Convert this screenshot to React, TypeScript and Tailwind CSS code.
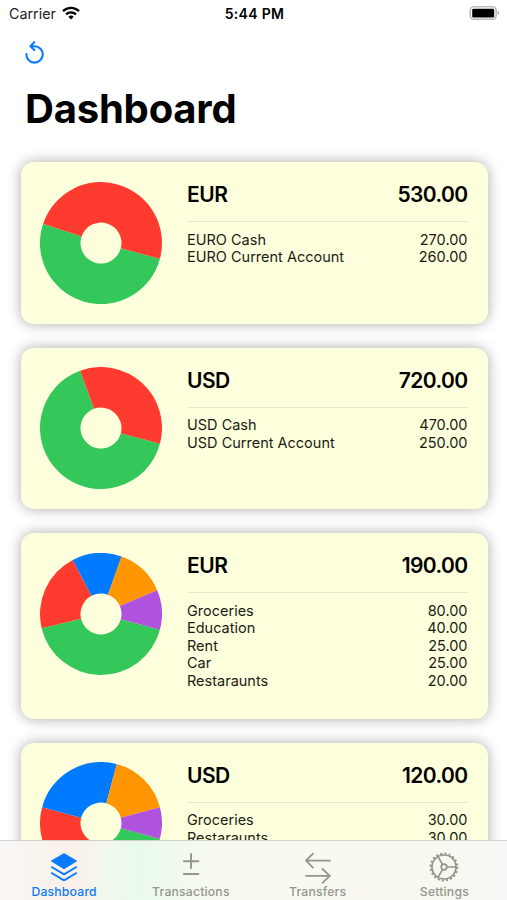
type Item = {
  name: string;
  amount: number;
};

type Account = {
  id: number;
  currency: string;
  height: string;
  items: Item[];
};

const COLORS = ["#34c759", "#ff3b30", "#007aff", "#ff9500", "#af52de"];

const accounts: Account[] = [
  {
    id: 1,
    currency: "EUR",
    height: "h-[161.5px]",
    items: [
      { name: "EURO Cash", amount: 270 },
      { name: "EURO Current Account", amount: 260 },
    ],
  },
  {
    id: 2,
    currency: "USD",
    height: "h-[161.5px]",
    items: [
      { name: "USD Cash", amount: 470 },
      { name: "USD Current Account", amount: 250 },
    ],
  },
  {
    id: 3,
    currency: "EUR",
    height: "h-[185.5px]",
    items: [
      { name: "Groceries", amount: 80 },
      { name: "Education", amount: 40 },
      { name: "Rent", amount: 25 },
      { name: "Car", amount: 25 },
      { name: "Restaraunts", amount: 20 },
    ],
  },
  {
    id: 4,
    currency: "USD",
    height: "h-[185.5px]",
    items: [
      { name: "Groceries", amount: 30 },
      { name: "Restaraunts", amount: 30 },
      { name: "Rent", amount: 30 },
      { name: "Education", amount: 20 },
      { name: "Car", amount: 10 },
    ],
  },
];

const getTotal = (items: Item[]) => items.reduce((sum, i) => sum + i.amount, 0);

const point = (angle: number, radius: number) => {
  const rad = (angle * Math.PI) / 180;
  return `${(61 + radius * Math.cos(rad)).toFixed(2)} ${(61 + radius * Math.sin(rad)).toFixed(2)}`;
};

const PieChart = ({ items }: { items: Item[] }) => {
  const total = getTotal(items);
  let angle = 15;

  return (
    <svg viewBox="0 0 122 122" className="size-[122px] shrink-0">
      {items.map((item, index) => {
        const start = angle;
        const end = start + (item.amount / total) * 360;
        const large = end - start > 180 ? 1 : 0;
        angle = end;
        return (
          <path
            key={item.name}
            fill={COLORS[index]}
            d={`M${point(start, 61)}A61 61 0 ${large} 1 ${point(end, 61)}L${point(end, 20.5)}A20.5 20.5 0 ${large} 0 ${point(start, 20.5)}Z`}
          />
        );
      })}
    </svg>
  );
};

const AccountCard = ({ account }: { account: Account }) => (
  <div
    className={`${account.height} shrink-0 flex gap-[25px] pl-[19.5px] pr-5 pt-[19.5px] rounded-[13px] bg-[#feffdc] shadow-[0_0_14px_rgba(0,0,0,0.33)]`}
  >
    <PieChart items={account.items} />
    <div className="flex-1">
      <div className="h-[40.5px] pt-[0.5px] flex justify-between border-b border-[#e6e7cb] text-[21px] leading-[26px] font-semibold">
        <span className="tracking-[-0.5px]">{account.currency}</span>
        <span className="tracking-[-0.6px]">{getTotal(account.items).toFixed(2)}</span>
      </div>
      <div className="pt-[8.5px] text-[14.5px] leading-[17.6px] text-[#1c1c14]">
        {account.items.map((item) => (
          <div key={item.name} className="flex justify-between">
            <span>{item.name}</span>
            <span>{item.amount.toFixed(2)}</span>
          </div>
        ))}
      </div>
    </div>
  </div>
);

const StatusBar = () => (
  <div className="h-7 shrink-0 grid grid-cols-3 items-center pl-[9px] pr-[7px] text-[14.3px]">
    <div className="flex items-center gap-[6px] text-[#222]">
      <span>Carrier</span>
      <svg viewBox="0 0 18 14" className="w-[18px] h-[14px] -mt-0.5" fill="none" stroke="#000" strokeWidth="2.3">
        <path d="M1 5.1a11.4 11.4 0 0 1 16 0" />
        <path d="M4 8.3a7.2 7.2 0 0 1 10 0" />
        <path d="M9 13.4 6.3 10.7a3.9 3.9 0 0 1 5.4 0Z" fill="#000" stroke="none" />
      </svg>
    </div>
    <div className="-mt-0.5 text-center text-[14px] font-semibold tracking-[0.3px] whitespace-nowrap">5:44 PM</div>
    <svg viewBox="0 0 31 14" className="w-[31px] h-[14px] -mt-0.5 justify-self-end">
      <rect x="1.2" y="0.8" width="26" height="12.6" rx="3.8" fill="#fff" stroke="#bdbdbd" strokeWidth="1.6" />
      <rect x="3.2" y="2.8" width="22" height="8.8" rx="1.4" />
      <path d="M28.6 5q3.2 2 0 4Z" fill="#aaa" />
    </svg>
  </div>
);

const LayersIcon = () => (
  <svg viewBox="0 0 28 30" className="w-7 h-[30px]" fill="none" stroke="currentColor" strokeWidth="1.9" strokeLinejoin="round">
    <path d="M14 1.6 26.6 9 14 16.8 1.4 9Z" fill="currentColor" strokeWidth="1" />
    <path d="M1.2 14.8 14 22.4l12.8-7.6M1.2 20.8 14 28.4l12.8-7.6" />
  </svg>
);

const PlusMinusIcon = () => (
  <svg viewBox="0 0 28 30" className="w-7 h-[30px]" fill="none" stroke="currentColor" strokeWidth="1.9" strokeLinecap="round">
    <path d="M14 2v14.2M6.8 9.2h14.6M6.8 22h14.6" />
  </svg>
);

const TransferIcon = () => (
  <svg viewBox="0 0 28 32" className="w-7 h-8 -mb-0.5" fill="none" stroke="currentColor" strokeWidth="1.8" strokeLinecap="round" strokeLinejoin="round">
    <path d="M26 8.6H2M9 1.6 2 8.6l7 7M2 23.8h24M18.5 17l7.3 6.8-7.3 7" />
  </svg>
);

const GearIcon = () => (
  <svg viewBox="0 0 30 30" className="size-[30px]" fill="none" stroke="currentColor" strokeWidth="1.7">
    <circle cx="15" cy="15" r="12" />
    <circle cx="15" cy="15" r="13.4" strokeWidth="2" strokeDasharray="2.1 2.11" />
    <circle cx="15" cy="15" r="2.8" />
    <path d="M17.8 15H27M13.6 12.6 9 4.6M13.6 17.4 9 25.4" />
  </svg>
);

const tabs = [
  { label: "Dashboard", icon: LayersIcon },
  { label: "Transactions", icon: PlusMinusIcon },
  { label: "Transfers", icon: TransferIcon },
  { label: "Settings", icon: GearIcon },
];

const TabBar = () => (
  <div className="h-[60px] shrink-0 grid grid-cols-4 border-t border-[#d2d2cc] bg-[linear-gradient(90deg,#f8f7f6_0%,#f9f4ef_6%,#faf0e9_15%,#f2f7ec_21%,#e8faea_27%,#eff9ec_33%,#f8f9f1_43%,#f8f8f1_88%,#f8f8f6_100%)]">
    {tabs.map(({ label, icon: Icon }, index) => (
      <button
        key={label}
        className={`flex flex-col items-center pl-[1.5px] pt-[11px] ${index === 0 ? "text-[#0a7bff]" : "text-[#94958d]"}`}
      >
        <Icon />
        <span className="text-[12.2px] leading-[19px] font-medium tracking-[0.2px]">{label}</span>
      </button>
    ))}
  </div>
);

const App = () => {
  return (
    <div className="w-[507px] h-[900px] flex flex-col overflow-hidden bg-white text-black font-['Inter',sans-serif]">
      <StatusBar />
      <div className="flex-1 min-h-0 overflow-hidden flex flex-col">
        <div className="h-[134px] shrink-0 pl-[25px] pt-[12px]">
          <button className="block text-[#0a7bff]">
            <svg viewBox="0 0 20 25" className="w-5 h-[25px]" fill="none" stroke="currentColor" strokeWidth="2.1" strokeLinecap="round" strokeLinejoin="round">
              <path d="M1.4 14A8.2 8.2 0 1 0 9.6 6.2H6.2M9.2 2.2 5.4 6.2l4 3.9" />
            </svg>
          </button>
          <h1 className="mt-[19px] text-[40px] leading-[50px] font-bold tracking-[-0.2px]">Dashboard</h1>
        </div>
        <div className="flex flex-col gap-6 pl-[20.5px] pr-[19.5px]">
          {accounts.map((account) => (
            <AccountCard key={account.id} account={account} />
          ))}
        </div>
      </div>
      <TabBar />
    </div>
  );
};

export default App;
